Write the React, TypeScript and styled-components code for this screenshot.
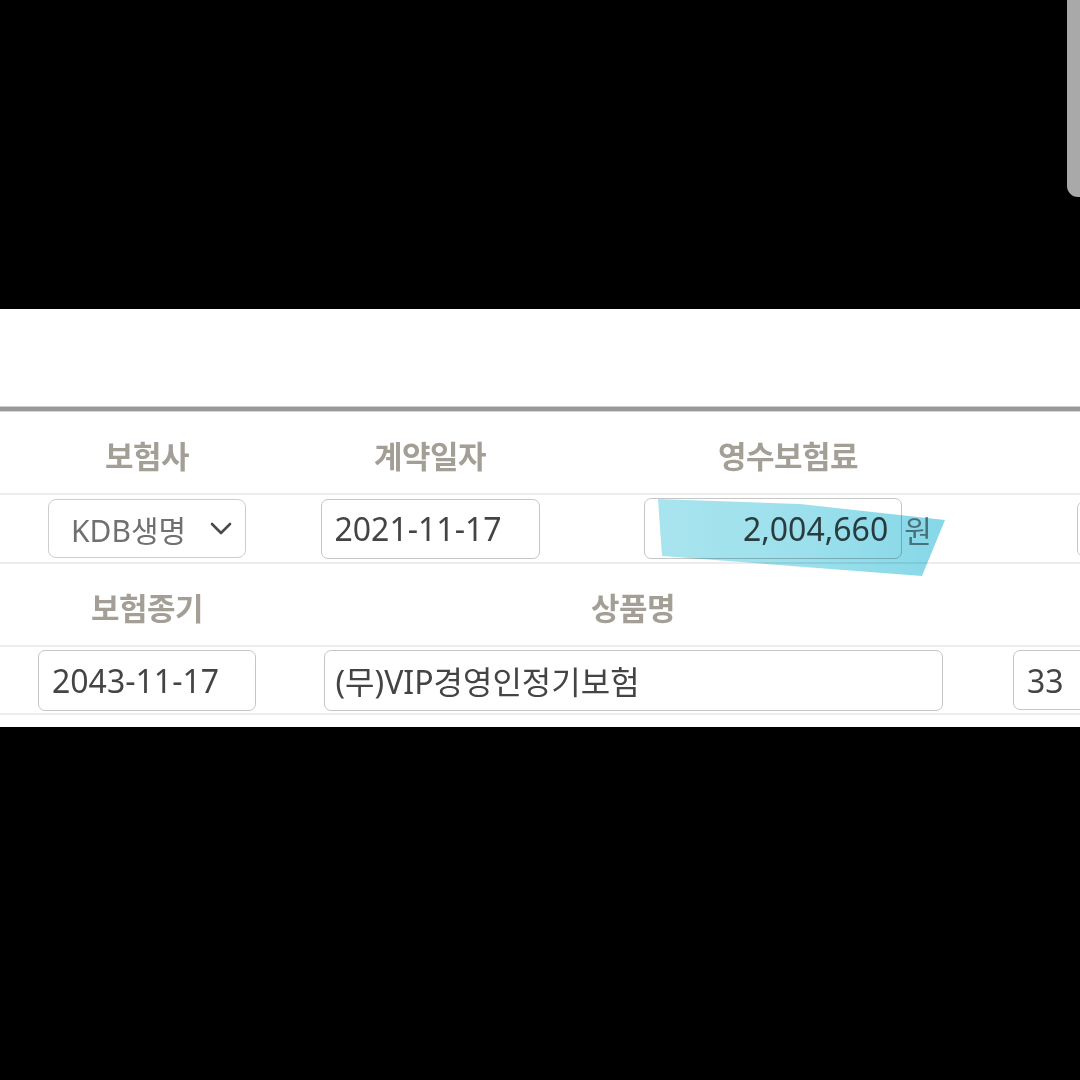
import React from "react";
import styled, { createGlobalStyle } from "styled-components";

const Global = createGlobalStyle`
  html, body { margin: 0; padding: 0; background: #000; }
  body { width: 1080px; height: 1080px; overflow: hidden; font-family: "Noto Sans", "Noto Sans CJK KR", sans-serif; }
`;

const Screen = styled.div`
  width: 1080px;
  height: 1080px;
  background: #000;
  display: flex;
  flex-direction: column;
`;

const TopArea = styled.div`
  height: 309px;
  display: flex;
  justify-content: flex-end;
  align-items: flex-start;
`;

const ScrollThumb = styled.div`
  width: 13px;
  height: 197px;
  background: #a9a9a9;
  border-bottom-left-radius: 11px;
`;

const Panel = styled.div`
  height: 418px;
  background: #fff;
  overflow: hidden;
  display: flex;
  flex-direction: column;
`;

const TopSpace = styled.div`
  height: 97px;
`;

const HeavyRule = styled.div`
  height: 4px;
  background: #999;
  border-top: 1px solid #cfcfcf;
  border-bottom: 1px solid #d6d6d6;
`;

const Divider = styled.div`
  height: 2px;
  background: #ececec;
`;

const Row = styled.div<{ $cols: string; $h: number }>`
  display: grid;
  grid-template-columns: ${(p) => p.$cols};
  height: ${(p) => p.$h}px;
  align-items: center;
  position: relative;
`;

const Label = styled.div`
  text-align: center;
  font-family: "Noto Sans CJK KR", sans-serif;
  font-weight: 700;
  font-size: 31px;
  line-height: 1;
  padding-top: 4px;
  color: #a39f96;
  letter-spacing: -0.5px;
`;

const Cell = styled.div<{ $pad?: number; $start?: boolean }>`
  display: flex;
  justify-content: ${(p) => (p.$start ? "flex-start" : "center")};
  align-items: center;
  padding-left: ${(p) => p.$pad || 0}px;
  position: relative;
  white-space: nowrap;
`;

const Field = styled.input<{ $w: number; $h: number; $right?: boolean; $padLeft?: number }>`
  box-sizing: border-box;
  width: ${(p) => p.$w}px;
  height: ${(p) => p.$h}px;
  flex: none;
  border: 1.5px solid #c6c6c6;
  border-radius: 7px;
  background: #fff;
  padding: 0 13px 0 ${(p) => p.$padLeft ?? 13}px;
  font-family: "Noto Sans", "Noto Sans CJK KR", sans-serif;
  font-size: 32px;
  color: #444;
  text-align: ${(p) => (p.$right ? "right" : "left")};
  outline: none;
`;

const SelectBox = styled.div`
  box-sizing: border-box;
  width: 198px;
  height: 59px;
  border: 1.5px solid #cdcdcd;
  border-radius: 8px;
  display: flex;
  align-items: center;
  padding: 0 12px 0 22px;
  gap: 24px;
  font-family: "Noto Sans", "Noto Sans CJK KR", sans-serif;
  font-size: 30px;
  color: #707070;
`;

const Unit = styled.span`
  font-family: "Noto Sans CJK KR", sans-serif;
  font-size: 30px;
  color: #858585;
  margin-left: 2px;
`;

const Highlight = styled.svg`
  position: absolute;
  left: 84px;
  top: -29px;
  width: 300px;
  height: 90px;
  pointer-events: none;
  mix-blend-mode: multiply;
  overflow: visible;
`;

const Chevron = () => (
  <svg width="22" height="14" viewBox="0 0 22 14">
    <polyline points="2,2 11,11 20,2" fill="none" stroke="#4a4a4a" strokeWidth="2.6" strokeLinecap="round" strokeLinejoin="round" />
  </svg>
);

export default function App() {
  return (
    <Screen>
      <Global />
      <TopArea>
        <ScrollThumb />
      </TopArea>
      <Panel>
        <TopSpace />
        <HeavyRule />
        <Row $cols="294px 272px 444px 1fr" $h={81}>
          <Label>보험사</Label>
          <Label>계약일자</Label>
          <Label>영수보험료</Label>
          <div />
        </Row>
        <Divider />
        <Row $cols="294px 272px 444px 1fr" $h={67}>
          <Cell>
            <SelectBox>
              <span>KDB생명</span>
              <Chevron />
            </SelectBox>
          </Cell>
          <Cell>
            <Field $w={219} $h={60} readOnly value="2021-11-17" />
          </Cell>
          <Cell>
            <Field $w={258} $h={61} $right readOnly value="2,004,660" />
            <Unit>원</Unit>
            <Highlight viewBox="0 0 300 90">
              <defs>
                <linearGradient id="hl" x1="0" y1="0" x2="1" y2="0">
                  <stop offset="0" stopColor="#a8e4ee" />
                  <stop offset="0.5" stopColor="#9ce0ec" />
                  <stop offset="1" stopColor="#86d7e8" />
                </linearGradient>
              </defs>
              <polygon points="8,30 150,35 295,51 272,107 12,87" fill="url(#hl)" />
            </Highlight>
          </Cell>
          <Cell $start $pad={67}>
            <Field $w={120} $h={56} readOnly value="" />
          </Cell>
        </Row>
        <Divider />
        <Row $cols="294px 678px 1fr" $h={81}>
          <Label>보험종기</Label>
          <Label>상품명</Label>
          <div />
        </Row>
        <Divider />
        <Row $cols="294px 678px 1fr" $h={66}>
          <Cell>
            <Field $w={218} $h={61} readOnly value="2043-11-17" />
          </Cell>
          <Cell>
            <Field $w={619} $h={61} $padLeft={11} readOnly value="(무)VIP경영인정기보험" />
          </Cell>
          <Cell $start $pad={41}>
            <Field $w={120} $h={60} readOnly value="33" />
          </Cell>
        </Row>
        <Divider />
      </Panel>
    </Screen>
  );
}
